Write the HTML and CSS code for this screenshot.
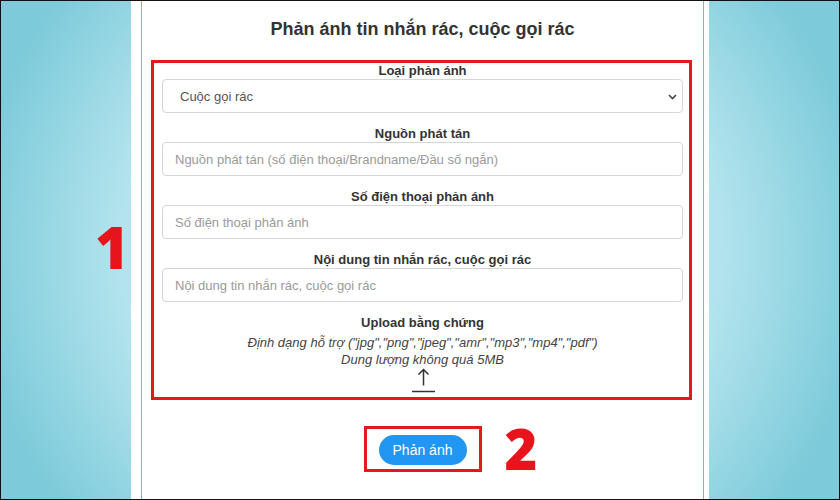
FILE: index.html
```html
<!DOCTYPE html>
<html lang="vi">
<head>
<meta charset="utf-8">
<title>Phản ánh tin nhắn rác, cuộc gọi rác</title>
<link rel="stylesheet" href="styles.css">
</head>
<body>
<div class="frame">
  <div class="side"></div>
  <main class="page">
    <div class="sheet">
      <h1 class="title">Phản ánh tin nhắn rác, cuộc gọi rác</h1>
      <form class="report">
        <div class="field">
          <label class="field-label">Loại phản ánh</label>
          <div class="select-wrap">
            <select class="control select"><option>Cuộc gọi rác</option></select>
            <svg class="chevron" width="9" height="6" viewBox="0 0 9 6"><path d="M1 1 L4.5 4.5 L8 1" fill="none" stroke="#444" stroke-width="1.6"/></svg>
          </div>
        </div>
        <div class="field">
          <label class="field-label">Nguồn phát tán</label>
          <input class="control" type="text" placeholder="Nguồn phát tán (số điện thoại/Brandname/Đầu số ngắn)">
        </div>
        <div class="field">
          <label class="field-label">Số điện thoại phản ánh</label>
          <input class="control" type="text" placeholder="Số điện thoại phản ánh">
        </div>
        <div class="field">
          <label class="field-label">Nội dung tin nhắn rác, cuộc gọi rác</label>
          <input class="control" type="text" placeholder="Nội dung tin nhắn rác, cuộc gọi rác">
        </div>
        <div class="upload">
          <div class="field-label upload-label">Upload bằng chứng</div>
          <p class="hint">Định dạng hỗ trợ ("jpg","png","jpeg","amr","mp3","mp4","pdf")</p>
          <p class="hint">Dung lượng không quá 5MB</p>
          <svg class="upload-icon" width="24" height="28" viewBox="0 0 24 28">
            <path d="M12.5 1.5 V17.5 M7.5 6.5 L12.5 1.5 L17.5 6.5" fill="none" stroke="#333" stroke-width="1.5"/>
            <path d="M1 23.5 H24" stroke="#333" stroke-width="1.5"/>
          </svg>
        </div>
      </form>
      <div class="submit-row">
        <div class="submit-box"><button class="submit" type="button">Phản ánh</button></div>
        <span class="mark mark-two">2</span>
      </div>
    </div>
  </main>
  <div class="side"></div>
  <span class="mark mark-one">1</span>
</div>
</body>
</html>
```
FILE: styles.css
```css
* { box-sizing: border-box; }

body {
  margin: 0;
  font-family: "Liberation Sans", Arial, sans-serif;
}

.frame {
  position: relative;
  width: 840px;
  height: 500px;
  border: 1px solid #111;
  display: grid;
  grid-template-columns: 130px 578px 1fr;
  background: radial-gradient(ellipse 450px 430px at 50% 50%, #b3e4ed 66%, #7ccada 100%);
  overflow: hidden;
}

.page {
  background: #fff;
  padding: 0 5px 0 10px;
}

.sheet {
  position: relative;
  height: 100%;
  border-left: 1px solid #7fb3d8;
  border-right: 1px solid #7fb3d8;
  display: flex;
  flex-direction: column;
}

.title {
  margin: 0;
  padding-top: 17px;
  font-size: 18px;
  font-weight: 700;
  line-height: 22px;
  text-align: center;
  color: #333;
}

.report {
  margin: 20px 11px 0 9px;
  border: 3px solid #e3191f;
  padding: 0 6px 1px 8px;
  display: flex;
  flex-direction: column;
  gap: 13px;
}

.field-label {
  display: block;
  font-size: 13px;
  font-weight: 700;
  line-height: 16px;
  text-align: center;
  color: #333;
}

.control {
  display: block;
  width: 100%;
  height: 34px;
  border: 1px solid #d6d6d6;
  border-radius: 4px;
  padding: 0 12px;
  font: 13px "Liberation Sans", Arial, sans-serif;
  color: #555;
  background: #fff;
  outline: none;
}

.control::placeholder { color: #9a9a9a; }

.select-wrap { position: relative; }

.select {
  appearance: none;
  -webkit-appearance: none;
  padding-left: 17px;
}

.chevron {
  position: absolute;
  right: 6px;
  top: 15px;
}

.upload-label { margin-bottom: 3px; }

.hint {
  margin: 0;
  font-size: 13px;
  font-style: italic;
  line-height: 17px;
  text-align: center;
  color: #444;
}

.upload-icon {
  display: block;
  margin: 0 auto;
}

.submit-row {
  position: relative;
  display: flex;
  justify-content: center;
  margin-top: 26px;
}

.submit-box {
  border: 3px solid #e3191f;
  padding: 6px 12px 4px;
}

.submit {
  display: block;
  width: 88px;
  height: 30px;
  padding: 0;
  border: none;
  border-radius: 16px;
  background: #2196f3;
  color: #fff;
  font: 14px "Liberation Sans", Arial, sans-serif;
}

.mark {
  position: absolute;
  color: #e8141b;
  font-family: "Open Sans", "Liberation Sans", sans-serif;
  font-weight: 800;
  line-height: 1;
}

.mark-two {
  left: 50%;
  margin-left: 82px;
  top: -6px;
  font-size: 56px;
}

.mark-one {
  left: 94px;
  top: 217px;
  font-size: 58px;
}
```
